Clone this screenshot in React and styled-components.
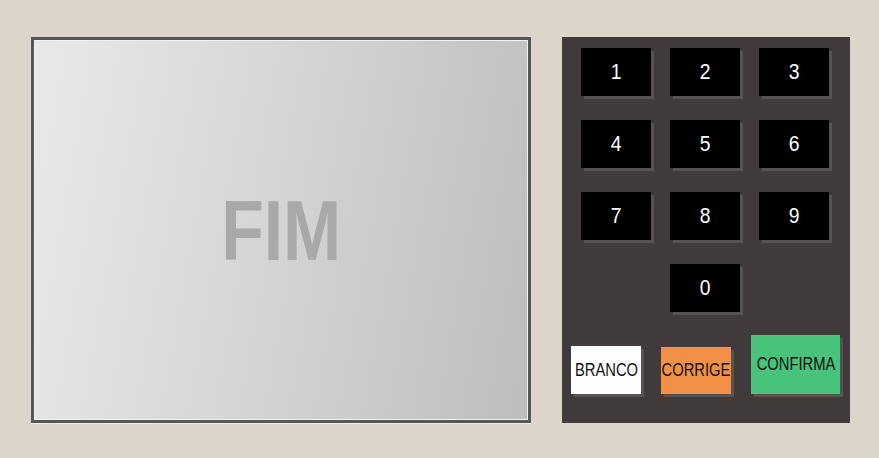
import React from 'react';
import styled, { createGlobalStyle } from 'styled-components';

const GlobalStyle = createGlobalStyle`
  html, body {
    margin: 0;
    padding: 0;
    background: #dcd5c9;
    font-family: "Liberation Sans", Arial, sans-serif;
  }
`

const Urna = styled.div`
  width: 879px;
  height: 458px;
  box-sizing: border-box;
  padding: 37px 29px 35px 31px;
  display: flex;
  gap: 31px;
  background: #dcd5c9;
`

const Screen = styled.div`
  width: 500px;
  height: 386px;
  box-sizing: border-box;
  border: 3px solid #575757;
  box-shadow: inset 0 0 0 1px #f2f2f2, 0 1px 0 #ececec;
  background: linear-gradient(100deg, #e9e9e9 0%, #d6d6d6 45%, #bdbdbd 100%);
  display: flex;
  align-items: center;
  justify-content: center;
`

const ScreenText = styled.span`
  display: inline-block;
  font-size: 85px;
  font-weight: bold;
  color: #a9a9a9;
  transform: scaleX(0.82);
  margin-top: 2px;
`

const Keypad = styled.div`
  width: 288px;
  height: 386px;
  box-sizing: border-box;
  background: #403b3a;
  padding: 11px 10px 29px 9px;
  display: flex;
  flex-direction: column;
`

const Keys = styled.div`
  display: grid;
  grid-template-columns: repeat(3, 70px);
  grid-auto-rows: 48px;
  column-gap: 19px;
  row-gap: 24px;
  padding-left: 10px;
`

const Key = styled.button`
  grid-column: ${(props) => props.col || 'auto'};
  border: none;
  padding: 0;
  margin: 0;
  background: #000;
  box-shadow: 3px 3px 0 #575352;
  color: #fff;
  font-family: "Liberation Sans", Arial, sans-serif;
  font-size: 22px;
  display: flex;
  align-items: center;
  justify-content: center;
  cursor: pointer;
`

const Label = styled.span`
  display: inline-block;
  transform: scaleX(${(props) => props.sx || 0.82});
`

const Actions = styled.div`
  margin-top: 23px;
  display: flex;
  align-items: flex-end;
  gap: 20px;
`

const Action = styled.button`
  width: ${(props) => props.w}px;
  height: ${(props) => props.h}px;
  border: none;
  padding: 0;
  margin: 0;
  background: ${(props) => props.bg};
  box-shadow: 3px 3px 0 #575352;
  color: #111;
  font-family: "Liberation Sans", Arial, sans-serif;
  font-size: 18px;
  display: flex;
  align-items: center;
  justify-content: center;
  white-space: nowrap;
  overflow: visible;
  cursor: pointer;
`

const digits = ['1', '2', '3', '4', '5', '6', '7', '8', '9'];

export default function App() {
  return (
    <>
      <GlobalStyle />
      <Urna>
        <Screen>
          <ScreenText>FIM</ScreenText>
        </Screen>
        <Keypad>
          <Keys>
            {digits.map((d) => (
              <Key key={d}><Label sx={0.88}>{d}</Label></Key>
            ))}
            <Key col={2}><Label sx={0.88}>0</Label></Key>
          </Keys>
          <Actions>
            <Action w={70} h={48} bg="#ffffff"><Label>BRANCO</Label></Action>
            <Action w={70} h={47} bg="#f29046"><Label>CORRIGE</Label></Action>
            <Action w={89} h={59} bg="#48c37b"><Label>CONFIRMA</Label></Action>
          </Actions>
        </Keypad>
      </Urna>
    </>
  );
}
